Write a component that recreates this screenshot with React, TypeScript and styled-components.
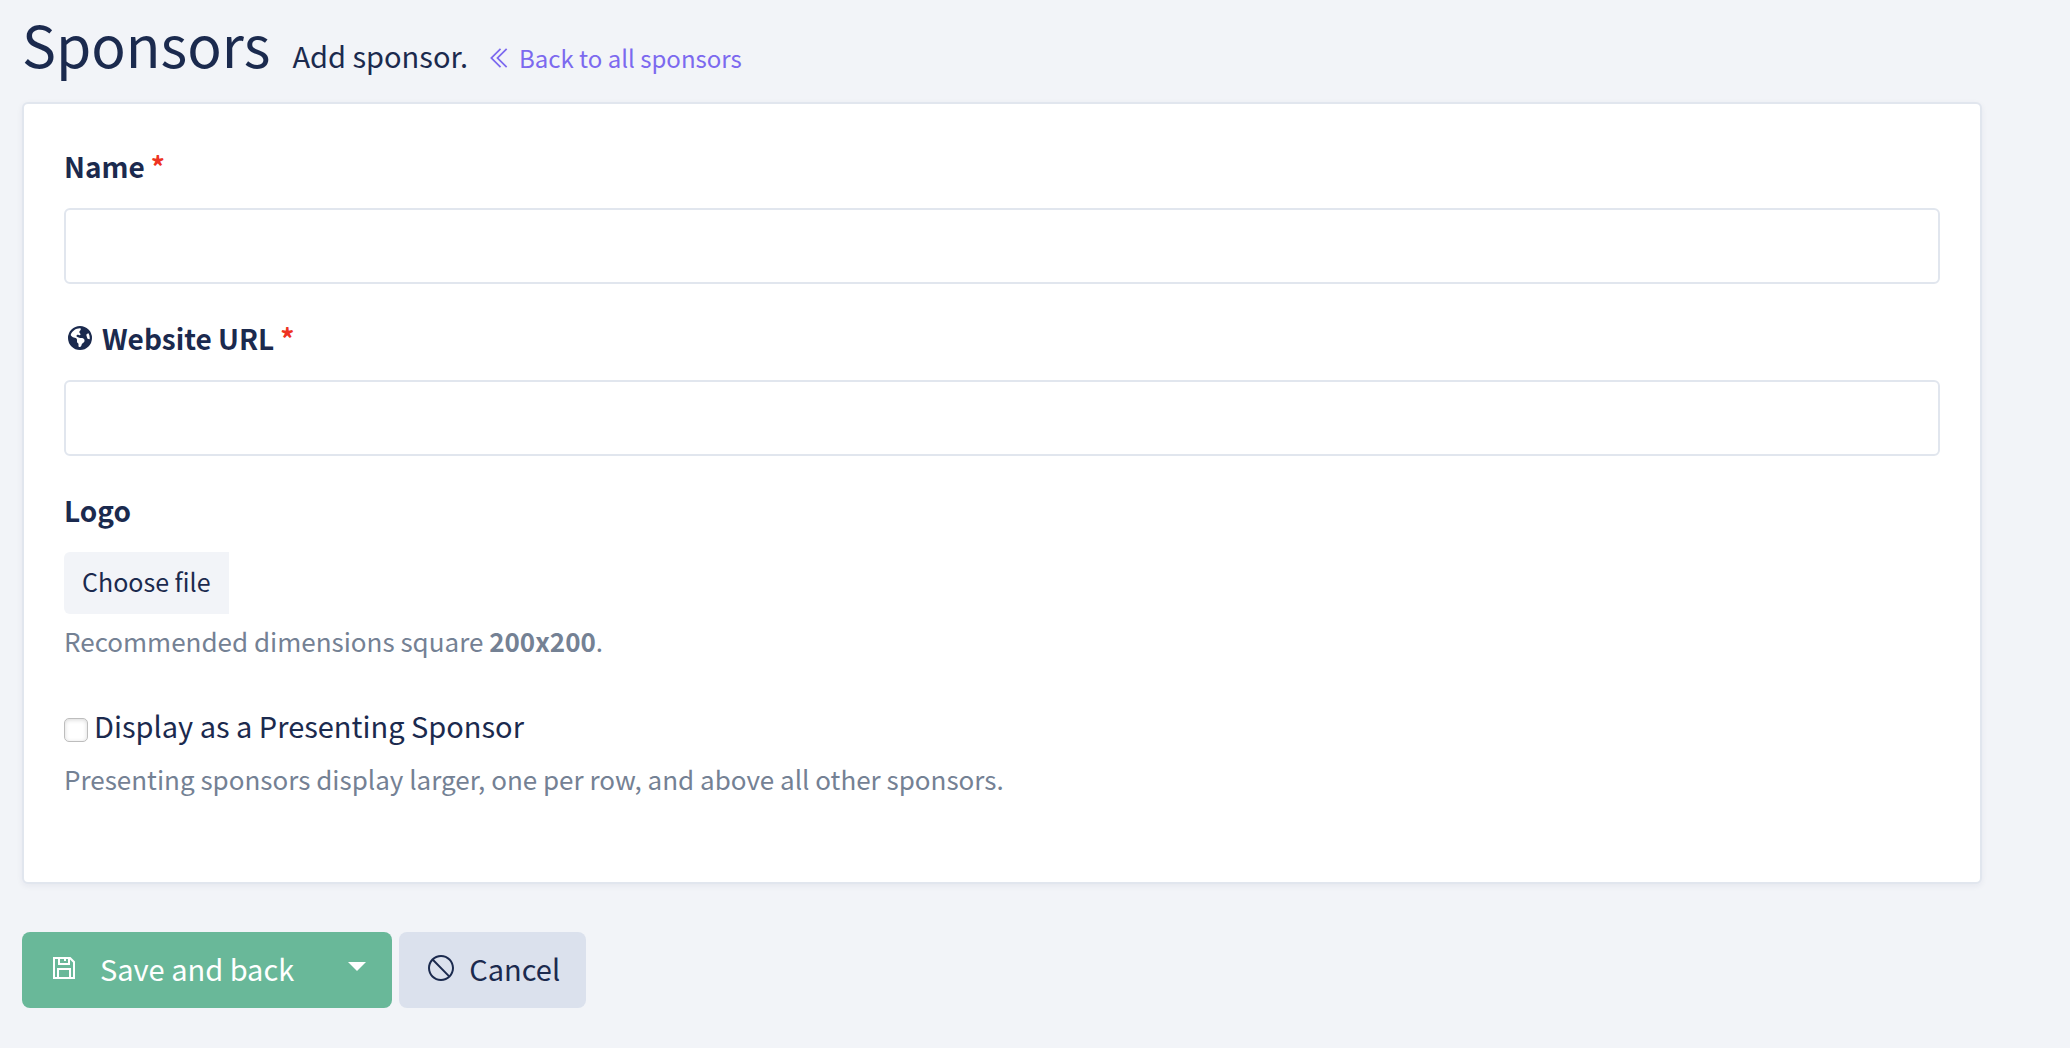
import React from "react";
import styled, { createGlobalStyle } from "styled-components";
import { LiaAngleDoubleLeftSolid, LiaBanSolid, LiaSave } from "react-icons/lia";
import { FaEarthAmericas } from "react-icons/fa6";

const navy = "#1b2a4e";
const line = "#e1e6ee";

const GlobalStyle = createGlobalStyle`
  *, *::before, *::after { box-sizing: border-box; }
  body {
    margin: 0;
    background: #f2f4f8;
    color: ${navy};
    font-family: "Noto Sans CJK SC", "Noto Sans", sans-serif;
    font-size: 29px;
    line-height: 44px;
  }
  button, input { font: inherit; color: inherit; }
  svg { display: block; flex: none; }
`;

const Page = styled.div`
  padding: 8px 88px 40px 22px;
`;

const Header = styled.header`
  display: flex;
  align-items: baseline;
  height: 94px;
`;

const Title = styled.h1`
  margin: 0 22px 0 0;
  font-size: 57px;
  font-weight: 400;
  line-height: 70px;
`;

const Subtitle = styled.p`
  margin: 0 18px 0 0;
`;

const BackLink = styled.a`
  display: flex;
  align-items: baseline;
  gap: 5px;
  color: #7c69ef;
  font-size: 24px;
  text-decoration: none;

  svg { align-self: center; }
`;

const Card = styled.section`
  padding: 40px 40px 52px;
  background: #fff;
  border: 2px solid ${line};
  border-radius: 6px;
  box-shadow: 0 2px 6px rgba(27, 42, 78, 0.06);
`;

const Field = styled.div`
  margin-bottom: 32px;
`;

const Label = styled.label`
  display: flex;
  align-items: center;
  gap: 6px;
  width: fit-content;
  margin-bottom: 20px;
  font-size: 28px;
  font-weight: 600;

  svg { margin: 0 4px; }
`;

const Required = styled.span`
  color: #ee3322;
`;

const TextInput = styled.input`
  display: block;
  width: 100%;
  height: 76px;
  padding: 12px 24px;
  background: #fff;
  border: 2px solid ${line};
  border-radius: 6px;
  outline: none;
`;

const FileInput = styled.input`
  position: absolute;
  width: 1px;
  height: 1px;
  overflow: hidden;
  opacity: 0;
`;

const FileButton = styled.label`
  display: block;
  width: fit-content;
  padding: 7px 18px 11px;
  background: #f2f4f8;
  border-radius: 6px 0 0 6px;
  font-size: 25px;
  cursor: pointer;
`;

const Help = styled.p`
  margin: 8px 0 0;
  color: #748194;
  font-size: 26px;
  line-height: 38px;
`;

const CheckRow = styled.div`
  display: flex;
  align-items: center;
  gap: 6px;
  padding: 11px 0 5px;
`;

const Checkbox = styled.input`
  appearance: none;
  width: 24px;
  height: 24px;
  margin: 10px 0 0;
  background: #fff;
  border: 1px solid #bdbdbd;
  border-radius: 5px;
  box-shadow: inset 0 1px 4px rgba(0, 0, 0, 0.16);

  &:checked { background: #7c69ef; }
`;

const Actions = styled.div`
  display: flex;
  gap: 7px;
  margin-top: 48px;
`;

const ButtonGroup = styled.div`
  display: flex;
`;

const Button = styled.button<{ $tone: "save" | "neutral"; $part?: "start" | "end" }>`
  display: flex;
  align-items: center;
  gap: ${({ $tone }) => ($tone === "save" ? 20 : 12)}px;
  height: 76px;
  padding: 0 ${({ $part }) => ($part === "start" ? 28 : 26)}px 4px 26px;
  border: 0;
  border-radius: ${({ $part }) =>
    $part === "start" ? "8px 0 0 8px" : $part === "end" ? "0 8px 8px 0" : "8px"};
  background: ${({ $tone }) => ($tone === "save" ? "#69b899" : "#dbe1ed")};
  color: ${({ $tone }) => ($tone === "save" ? "#fff" : navy)};
  cursor: pointer;
`;

const Caret = styled.span`
  margin-bottom: 4px;
  border: 9px solid transparent;
  border-top-color: currentColor;
  border-bottom: 0;
`;

export default function App() {
  return (
    <>
      <GlobalStyle />
      <Page>
        <Header>
          <Title>Sponsors</Title>
          <Subtitle>Add sponsor.</Subtitle>
          <BackLink href="#sponsors">
            <LiaAngleDoubleLeftSolid size={28} aria-hidden />
            Back to all sponsors
          </BackLink>
        </Header>
        <form onSubmit={(e) => e.preventDefault()}>
          <Card>
            <Field>
              <Label htmlFor="name">
                Name <Required>*</Required>
              </Label>
              <TextInput id="name" type="text" />
            </Field>
            <Field>
              <Label htmlFor="url">
                <FaEarthAmericas size={24} aria-hidden />
                Website URL <Required>*</Required>
              </Label>
              <TextInput id="url" type="text" />
            </Field>
            <Field>
              <Label htmlFor="logo">Logo</Label>
              <FileInput id="logo" type="file" />
              <FileButton htmlFor="logo">Choose file</FileButton>
              <Help>
                Recommended dimensions square <strong>200x200</strong>.
              </Help>
            </Field>
            <Field>
              <CheckRow>
                <Checkbox id="presenting" type="checkbox" />
                <label htmlFor="presenting">Display as a Presenting Sponsor</label>
              </CheckRow>
              <Help>
                Presenting sponsors display larger, one per row, and above all other sponsors.
              </Help>
            </Field>
          </Card>
          <Actions>
            <ButtonGroup>
              <Button type="submit" $tone="save" $part="start">
                <LiaSave size={32} aria-hidden />
                Save and back
              </Button>
              <Button type="button" $tone="save" $part="end" aria-label="More save options">
                <Caret />
              </Button>
            </ButtonGroup>
            <Button type="button" $tone="neutral">
              <LiaBanSolid size={32} aria-hidden />
              Cancel
            </Button>
          </Actions>
        </form>
      </Page>
    </>
  );
}
